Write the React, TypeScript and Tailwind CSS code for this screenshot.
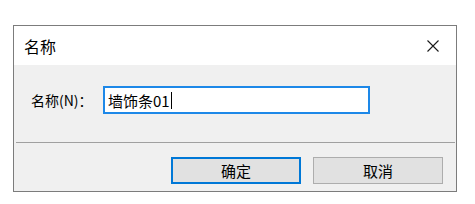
import React from 'react';

const cjk = { fontFamily: '"Noto Sans CJK SC", "Noto Sans", sans-serif' };

function CloseIcon() {
  return (
    <svg width="12" height="12" viewBox="0 0 12 12" className="text-[#1a1a1a]">
      <path d="M0.5 0.5 L11.5 11.5 M11.5 0.5 L0.5 11.5" stroke="currentColor" strokeWidth="1.1" fill="none" />
    </svg>
  );
}

export default function App() {
  return (
    <div className="w-[475px] h-[204px] bg-white overflow-hidden" style={cjk}>
      <div className="ml-[13px] mt-[25px] w-[444px] h-[167px] border border-[#7c7c7c] flex flex-col bg-[#f0f0f0]">
        {/* title bar */}
        <div className="h-[39px] bg-white flex items-center justify-between pl-[10px] pr-[17px]">
          <span className="text-[16px] text-black leading-none">名称</span>
          <CloseIcon />
        </div>

        {/* body */}
        <div className="flex items-center mt-[21px] pl-[17px]">
          <label className="w-[72px] text-[14px] text-black leading-none">名称(N)：</label>
          <div className="w-[267px] h-[28px] bg-white border-2 border-[#1d88e8] flex items-center pl-[3px]">
            <span className="text-[15px] text-black leading-none">墙饰条01</span>
            <span className="w-px h-[17px] bg-black ml-px" />
          </div>
        </div>

        <div className="mt-[28px] ml-[2px] mr-px h-px bg-[#a0a0a0]" />

        {/* buttons */}
        <div className="flex justify-end gap-[12px] mt-[14px] pr-[13px]">
          <button className="w-[130px] h-[27px] bg-[#e1e1e1] border-2 border-[#0078d7] text-[15px] text-black leading-none">
            确定
          </button>
          <button className="w-[130px] h-[27px] bg-[#e1e1e1] border border-[#adadad] text-[15px] text-black leading-none">
            取消
          </button>
        </div>
      </div>
    </div>
  );
}
